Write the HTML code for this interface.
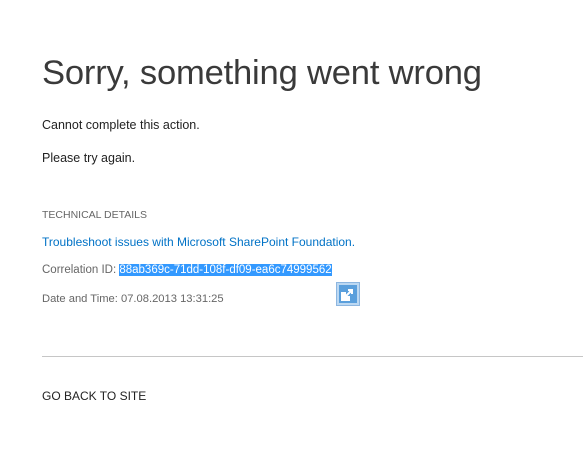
<!DOCTYPE html>
<html><head><meta charset="utf-8"><style>
body{margin:0;width:583px;height:460px;background:#fff;font-family:"Liberation Sans",sans-serif;position:relative;overflow:hidden}
div{position:absolute;left:42px;white-space:nowrap}
.t{top:54px;font-size:34.6px;color:#3a3a3a;letter-spacing:-0.2px}
.b{font-size:12.5px;color:#222}
.g{font-size:11.5px;color:#666}
.l{font-size:12px;color:#0072c6}
.sel{background:#3399ff;color:#fff}
hr{position:absolute;left:42px;width:541px;margin:0;border:0;border-top:1px solid #c6c6c6}
</style></head><body>
<div class="t">Sorry, something went wrong</div>
<div class="b" style="top:118px">Cannot complete this action.</div>
<div class="b" style="top:151px">Please try again.</div>
<div class="g" style="top:209px;font-size:10.5px">TECHNICAL DETAILS</div>
<div class="l" style="top:235px">Troubleshoot issues with Microsoft SharePoint Foundation.</div>
<div class="g" style="top:264px">Correlation ID: <span class="sel">88ab369c-71dd-108f-df09-ea6c74999562</span></div>
<div class="g" style="top:293px;font-size:11.2px">Date and Time: 07.08.2013 13:31:25</div>
<svg style="position:absolute;left:336px;top:282px" width="24" height="24" viewBox="0 0 24 24">
<rect x="0.5" y="0.5" width="23" height="23" fill="#bcd8f2" stroke="#8db6e0"/>
<rect x="3" y="3" width="18" height="18" fill="#5a9fdc"/>
<path d="M6 18V11h3v4h4v3z M10 14l6-6M12 8h4v4" fill="#fff" stroke="#fff" stroke-width="2"/>
</svg>
<hr style="top:356px">
<div class="b" style="top:389px;font-size:12px;color:#222">GO BACK TO SITE</div>
</body></html>
